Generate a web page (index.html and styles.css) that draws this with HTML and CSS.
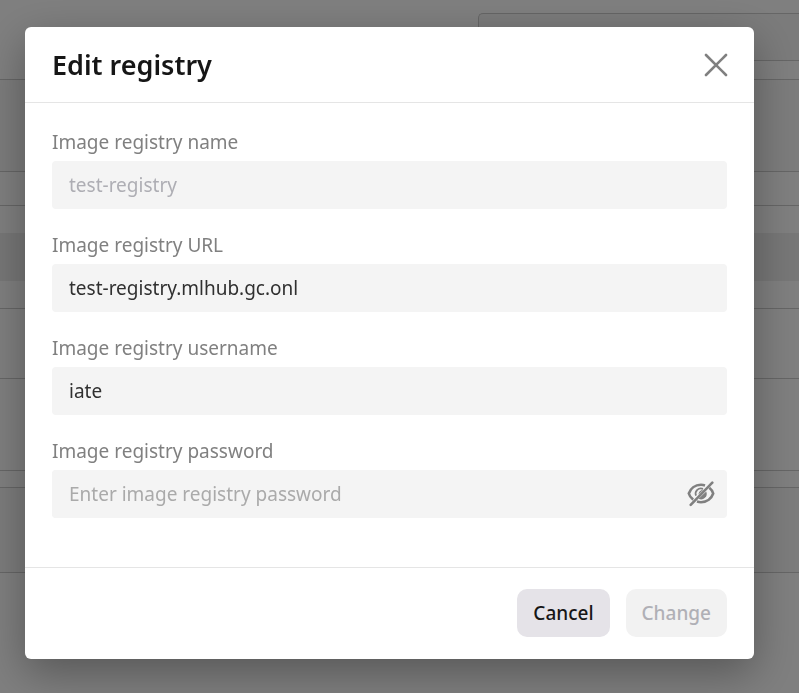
FILE: index.html
```html
<!DOCTYPE html>
<html lang="en">
<head>
    <meta charset="UTF-8">
    <meta name="viewport" content="width=device-width, initial-scale=1.0">
    <title>Edit registry</title>
    <link rel="stylesheet" href="styles.css">
</head>
<body>
    <main class="page" aria-hidden="true">
        <div class="page-search"></div>
        <div class="page-panel panel-head"></div>
        <div class="page-panel panel-filter">
            <div class="panel-band"></div>
        </div>
        <div class="page-row row-short"></div>
        <div class="page-row row-tall"></div>
        <div class="page-panel panel-last"></div>
    </main>

    <div class="overlay">
        <form class="modal" role="dialog" aria-modal="true" aria-labelledby="modal-title">
            <header class="modal-header">
                <h1 id="modal-title">Edit registry</h1>
                <button type="button" class="icon-button" aria-label="Close">
                    <svg width="24" height="24" viewBox="0 0 24 24" fill="none" stroke="currentColor" stroke-width="2.6" stroke-linecap="round">
                        <path d="M2 2L22 22M22 2L2 22"/>
                    </svg>
                </button>
            </header>

            <div class="modal-body">
                <div class="field">
                    <label for="name">Image registry name</label>
                    <input type="text" id="name" value="test-registry" disabled>
                </div>
                <div class="field">
                    <label for="url">Image registry URL</label>
                    <input type="text" id="url" value="test-registry.mlhub.gc.onl">
                </div>
                <div class="field">
                    <label for="username">Image registry username</label>
                    <input type="text" id="username" value="iate">
                </div>
                <div class="field">
                    <label for="password">Image registry password</label>
                    <div class="password-box">
                        <input type="password" id="password" placeholder="Enter image registry password">
                        <button type="button" class="icon-button" aria-label="Show password">
                            <svg width="28" height="28" viewBox="0 0 28 28" fill="none" stroke="currentColor">
                                <path d="M18 5.400C16.800 5 15.400 4.800 14 4.800C8 4.800 3.500 8.500 1.800 13.500C2.500 16 4 18 6.200 19.600" stroke-width="2.600"/>
                                <path d="M22.300 7.700C24.200 9.200 25.600 11.200 26.200 13.500C24.500 18.500 20 22.200 14 22.200C12.600 22.200 11.300 22 10 21.600" stroke-width="2.600"/>
                                <path d="M16 8.800A5.300 5.300 0 0 0 9 15.600" stroke-width="1.800"/>
                                <path d="M19.200 11.500A5.600 5.600 0 0 1 11.600 18.800Z" fill="currentColor" stroke="none"/>
                                <path d="M16.500 9.500L11.500 14.600C11.400 12.300 13.500 10 16.500 9.500Z" fill="currentColor" stroke="none"/>
                                <path d="M3.700 24.800L25.300 2.700" stroke-width="2.600" stroke-linecap="round"/>
                            </svg>
                        </button>
                    </div>
                </div>
            </div>

            <footer class="modal-footer">
                <button type="button" class="button">Cancel</button>
                <button type="submit" class="button" disabled>Change</button>
            </footer>
        </form>
    </div>
</body>
</html>
```
FILE: styles.css
```css
* {
    box-sizing: border-box;
}
body {
    margin: 0;
    font-family: "Noto Sans", sans-serif;
    font-size: 19px;
    color: #303030;
    background-color: #fff;
}
button, input {
    font: inherit;
}

/* Page behind the dialog */
.page {
    padding-top: 13px;
}
.page-search {
    height: 48px;
    margin-left: 478px;
    margin-bottom: 18px;
    border: 1px solid #ccc;
    border-right: 0;
    border-radius: 5px 0 0 5px;
    background-color: #f6f6f6;
}
.page-panel {
    border-top: 1px solid #ccc;
    border-bottom: 1px solid #ccc;
}
.panel-head {
    height: 93px;
    margin-bottom: 33px;
    background-color: #f9f9f9;
}
.panel-filter {
    padding: 27px 0;
}
.panel-band {
    height: 48px;
    background-color: #eee;
}
.page-row {
    border-bottom: 1px solid #ccc;
}
.row-short {
    height: 70px;
}
.row-tall {
    height: 92px;
}
.panel-last {
    height: 86px;
    margin-top: 16px;
    background-color: #f9f9f9;
}

/* Dialog */
.overlay {
    position: fixed;
    inset: 0;
    padding: 27px 45px 34px 25px;
    background-color: rgba(0, 0, 0, 0.5);
}
.modal {
    border-radius: 6px;
    background-color: #fff;
    box-shadow: 0 14px 44px rgba(0, 0, 0, 0.32);
}
.modal-header {
    display: flex;
    align-items: center;
    justify-content: space-between;
    padding: 19px 26px 18px 27px;
    border-bottom: 1px solid #e5e5e5;
}
.modal-header h1 {
    margin: 0;
    font-size: 27px;
    font-weight: 600;
    line-height: 38px;
    color: #161616;
}
.icon-button {
    display: flex;
    padding: 0;
    border: 0;
    background: none;
    color: #808080;
    cursor: pointer;
}
.modal-body {
    display: flex;
    flex-direction: column;
    gap: 22px;
    padding: 25px 27px 49px;
}
.field label {
    display: block;
    margin-bottom: 5px;
    line-height: 28px;
    color: #808080;
}
.field input {
    width: 100%;
    height: 48px;
    padding: 0 17px;
    border: 0;
    border-radius: 4px;
    background-color: #f4f4f4;
    color: #303030;
}
.field input:disabled {
    color: #aeaeb4;
}
.field input::placeholder {
    color: #aaa;
}
.password-box {
    display: flex;
    align-items: center;
    padding-right: 12px;
    border-radius: 4px;
    background-color: #f4f4f4;
}
.modal-footer {
    display: flex;
    justify-content: flex-end;
    gap: 16px;
    padding: 21px 27px 22px;
    border-top: 1px solid #e5e5e5;
}
.button {
    height: 48px;
    padding: 0 16px;
    border: 0;
    border-radius: 10px;
    background-color: #e5e3e8;
    font-weight: 500;
    color: #161616;
    cursor: pointer;
}
.button:disabled {
    background-color: #f2f2f2;
    color: #b0b0b6;
    cursor: default;
}
```
